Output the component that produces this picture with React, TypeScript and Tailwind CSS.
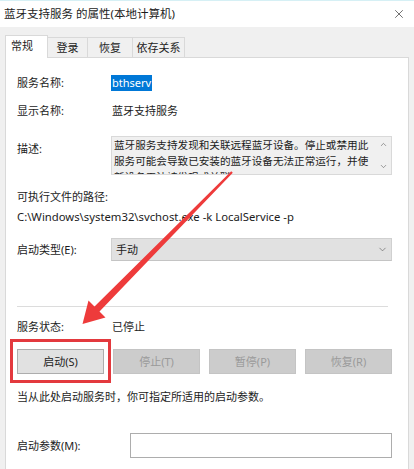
import { X, ChevronDown, ChevronUp } from "lucide-react";

const font = "font-['Noto_Sans','Noto_Sans_CJK_SC',sans-serif]";

function Field({ label, children }: { label: string; children: React.ReactNode }) {
  return (
    <div className="flex items-center">
      <span className="w-[95px] shrink-0">{label}</span>
      {children}
    </div>
  );
}

export default function App() {
  const buttons = ["停止(T)", "暂停(P)", "恢复(R)"];

  return (
    <div
      className={`relative w-[414px] h-[469px] overflow-hidden bg-[#f0f0f0] text-[11px] leading-[16px] text-[#1c1c1c] ${font}`}
    >
      {/* Title bar */}
      <div className="h-[27px] bg-white border-t border-[#d6f0f5] flex items-center justify-between pl-[4px] pr-[8px]">
        <span className="text-[11.5px]">蓝牙支持服务 的属性(本地计算机)</span>
        <X size={14} strokeWidth={1.2} className="text-[#333]" />
      </div>

      {/* Tabs */}
      <div className="flex items-end pl-[5px] pt-[8px]">
        <div className="h-[23px] w-[43px] bg-white border border-b-0 border-[#d9d9d9] pl-[5px] pt-[2px] -mb-px relative z-10">
          常规
        </div>
        <div className="h-[20px] w-[40px] border-t border-r border-[#d9d9d9] flex items-center justify-center">登录</div>
        <div className="h-[20px] w-[45px] border-t border-r border-[#d9d9d9] flex items-center justify-center">恢复</div>
        <div className="h-[20px] w-[52px] border-t border-r border-[#d9d9d9] flex items-center justify-center">依存关系</div>
      </div>

      {/* Panel */}
      <div className="ml-[5px] w-[404px] h-[420px] bg-white border border-[#d9d9d9] pl-[11px] pr-[16px] pt-[17px]">
        <Field label="服务名称:">
          <span className="bg-[#0078d7] text-white px-[1px] -ml-px">bthserv</span>
        </Field>

        <div className="mt-[12px]">
          <Field label="显示名称:">
            <span>蓝牙支持服务</span>
          </Field>
        </div>

        <div className="mt-[17px] flex items-start">
          <span className="w-[94px] shrink-0 pt-[5px]">描述:</span>
          <div className="flex-1 h-[39px] bg-[#f0f0f0] border border-[#d9d9d9] flex overflow-hidden">
            <div className="flex-1 pl-[2px] text-[10.6px] whitespace-nowrap overflow-hidden">
              <div>蓝牙服务支持发现和关联远程蓝牙设备。停止或禁用此</div>
              <div>服务可能会导致已安装的蓝牙设备无法正常运行，并使</div>
              <div>新设备无法被发现或关联</div>
            </div>
            <div className="w-[16px] flex flex-col items-center justify-between py-[3px] text-[#555]">
              <ChevronUp size={9} strokeWidth={1.5} />
              <ChevronDown size={9} strokeWidth={1.5} />
            </div>
          </div>
        </div>

        <div className="mt-[14px]">可执行文件的路径:</div>
        <div className="mt-[4px] text-[11.3px]">C:\Windows\system32\svchost.exe -k LocalService -p</div>

        <div className="mt-[13px] flex items-center">
          <span className="w-[94px] shrink-0">启动类型(E):</span>
          <div className="flex-1 h-[23px] bg-[#e1e1e1] border border-[#d0d0d0] border-b-[#c4c4c4] flex items-center justify-between pl-[4px] pr-[3px]">
            <span>手动</span>
            <ChevronDown size={11} strokeWidth={1.3} className="text-[#555]" />
          </div>
        </div>

        <div className="mt-[45px] mr-[4px] h-px bg-[#dcdcdc]" />

        <div className="mt-[12px]">
          <Field label="服务状态:">
            <span>已停止</span>
          </Field>
        </div>

        <div className="mt-[14px] flex justify-between">
          <div className="relative">
            <div className="w-[87px] h-[25px] bg-[#e1e1e1] border border-[#adadad] flex items-center justify-center">
              启动(S)
            </div>
            <span className="absolute -left-[7px] -right-[7px] -top-[10px] -bottom-[9px] border-[3px] border-[#e3393e]" />
          </div>
          {buttons.map((b) => (
            <div
              key={b}
              className="w-[87px] h-[25px] bg-[#cccccc] border border-[#c4c4c4] text-[#9a9a9a] flex items-center justify-center"
            >
              {b}
            </div>
          ))}
        </div>

        <div className="mt-[15px]">当从此处启动服务时，你可指定所适用的启动参数。</div>

        <div className="mt-[28px] flex items-center">
          <span className="w-[113px] shrink-0">启动参数(M):</span>
          <div className="flex-1 h-[25px] bg-white border border-[#adadad]" />
        </div>
      </div>

      {/* Red annotation arrow */}
      <svg className="absolute left-0 top-0 pointer-events-none" width="414" height="469">
        <polygon
          points="232.8,172.7 231.2,171.3 94.5,306.5 88.5,300.5 82.5,324 105.5,317.5 99.5,311.5"
          fill="#ee3b3b"
        />
      </svg>
    </div>
  );
}
